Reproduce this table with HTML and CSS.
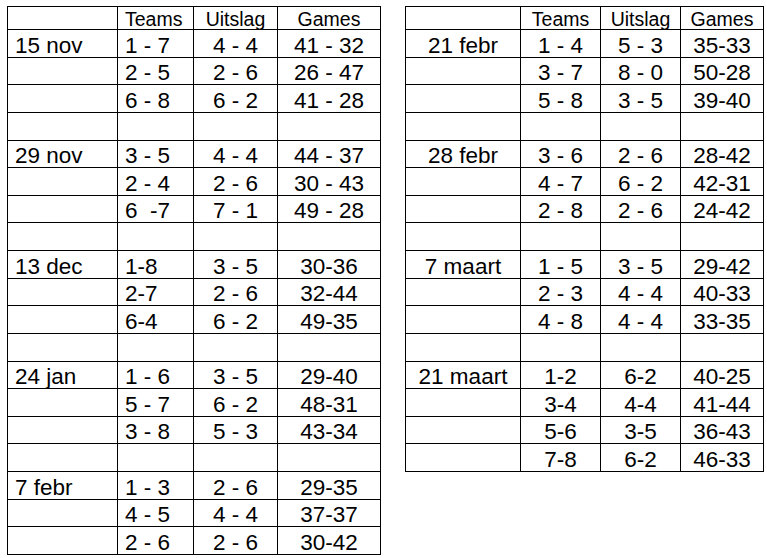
FILE: index.html
```html
<!DOCTYPE html>
<html lang="nl">
<head>
<meta charset="utf-8">
<title>Schema</title>
<link rel="stylesheet" href="styles.css">
</head>
<body>
<div class="page">
  <table class="sched sched-left">
    <colgroup>
      <col class="c-date-l"><col class="c-teams-l"><col class="c-res-l"><col class="c-games-l">
    </colgroup>
    <thead>
      <tr class="head"><th></th><th class="al">Teams</th><th>Uitslag</th><th>Games</th></tr>
    </thead>
    <tbody>
      <tr><td class="al">15 nov</td><td class="al">1 - 7</td><td>4 - 4</td><td>41 - 32</td></tr>
      <tr><td></td><td class="al">2 - 5</td><td>2 - 6</td><td>26 - 47</td></tr>
      <tr><td></td><td class="al">6 - 8</td><td>6 - 2</td><td>41 - 28</td></tr>
      <tr><td></td><td></td><td></td><td></td></tr>
      <tr><td class="al">29 nov</td><td class="al">3 - 5</td><td>4 - 4</td><td>44 - 37</td></tr>
      <tr><td></td><td class="al">2 - 4</td><td>2 - 6</td><td>30 - 43</td></tr>
      <tr><td></td><td class="al">6 &nbsp;-7</td><td>7 - 1</td><td>49 - 28</td></tr>
      <tr><td></td><td></td><td></td><td></td></tr>
      <tr><td class="al">13 dec</td><td class="al">1-8</td><td>3 - 5</td><td>30-36</td></tr>
      <tr><td></td><td class="al">2-7</td><td>2 - 6</td><td>32-44</td></tr>
      <tr><td></td><td class="al">6-4</td><td>6 - 2</td><td>49-35</td></tr>
      <tr><td></td><td></td><td></td><td></td></tr>
      <tr><td class="al">24 jan</td><td class="al">1 - 6</td><td>3 - 5</td><td>29-40</td></tr>
      <tr><td></td><td class="al">5 - 7</td><td>6 - 2</td><td>48-31</td></tr>
      <tr><td></td><td class="al">3 - 8</td><td>5 - 3</td><td>43-34</td></tr>
      <tr><td></td><td></td><td></td><td></td></tr>
      <tr><td class="al">7 febr</td><td class="al">1 - 3</td><td>2 - 6</td><td>29-35</td></tr>
      <tr><td></td><td class="al">4 - 5</td><td>4 - 4</td><td>37-37</td></tr>
      <tr class="last"><td></td><td class="al">2 - 6</td><td>2 - 6</td><td>30-42</td></tr>
    </tbody>
  </table>

  <table class="sched sched-right">
    <colgroup>
      <col class="c-date-r"><col class="c-teams-r"><col class="c-res-r"><col class="c-games-r">
    </colgroup>
    <thead>
      <tr class="head"><th></th><th>Teams</th><th>Uitslag</th><th>Games</th></tr>
    </thead>
    <tbody>
      <tr><td>21 febr</td><td>1 - 4</td><td>5 - 3</td><td>35-33</td></tr>
      <tr><td></td><td>3 - 7</td><td>8 - 0</td><td>50-28</td></tr>
      <tr><td></td><td>5 - 8</td><td>3 - 5</td><td>39-40</td></tr>
      <tr><td></td><td></td><td></td><td></td></tr>
      <tr><td>28 febr</td><td>3 - 6</td><td>2 - 6</td><td>28-42</td></tr>
      <tr><td></td><td>4 - 7</td><td>6 - 2</td><td>42-31</td></tr>
      <tr><td></td><td>2 - 8</td><td>2 - 6</td><td>24-42</td></tr>
      <tr><td></td><td></td><td></td><td></td></tr>
      <tr><td>7 maart</td><td>1 - 5</td><td>3 - 5</td><td>29-42</td></tr>
      <tr><td></td><td>2 - 3</td><td>4 - 4</td><td>40-33</td></tr>
      <tr><td></td><td>4 - 8</td><td>4 - 4</td><td>33-35</td></tr>
      <tr><td></td><td></td><td></td><td></td></tr>
      <tr><td>21 maart</td><td>1-2</td><td>6-2</td><td>40-25</td></tr>
      <tr><td></td><td>3-4</td><td>4-4</td><td>41-44</td></tr>
      <tr><td></td><td>5-6</td><td>3-5</td><td>36-43</td></tr>
      <tr><td></td><td>7-8</td><td>6-2</td><td>46-33</td></tr>
    </tbody>
  </table>
</div>
</body>
</html>
```

FILE: styles.css
```css
html, body {
  margin: 0;
  padding: 0;
  background: #ffffff;
}

body {
  font-family: "Liberation Sans", Arial, sans-serif;
  color: #000000;
}

.page {
  display: flex;
  align-items: flex-start;
  gap: 24px;
  padding: 6px 0 0 7px;
}

.sched {
  border-collapse: separate;
  border-spacing: 0;
  border-left: 1px solid #000;
  border-top: 1px solid #000;
  table-layout: fixed;
  box-sizing: border-box;
}

.sched-left { width: 374px; }
.sched-right { width: 359px; }

.c-date-l { width: 110px; }
.c-teams-l { width: 76px; }
.c-res-l { width: 84px; }
.c-games-l { width: 103px; }

.c-date-r { width: 115px; }
.c-teams-r { width: 80px; }
.c-res-r { width: 80px; }
.c-games-r { width: 83px; }

.sched th,
.sched td {
  border-right: 1px solid #000;
  border-bottom: 1px solid #000;
  padding: 0 7px;
  vertical-align: bottom;
  text-align: center;
  white-space: nowrap;
  overflow: hidden;
}

.sched th {
  font-weight: normal;
  font-size: 19.5px;
  line-height: 19px;
}

.sched td {
  font-size: 22.5px;
  line-height: 22px;
}

.sched .al { text-align: left; }

.sched tr.head { height: 23px; }
.sched tbody tr { height: 27.63px; }
```
